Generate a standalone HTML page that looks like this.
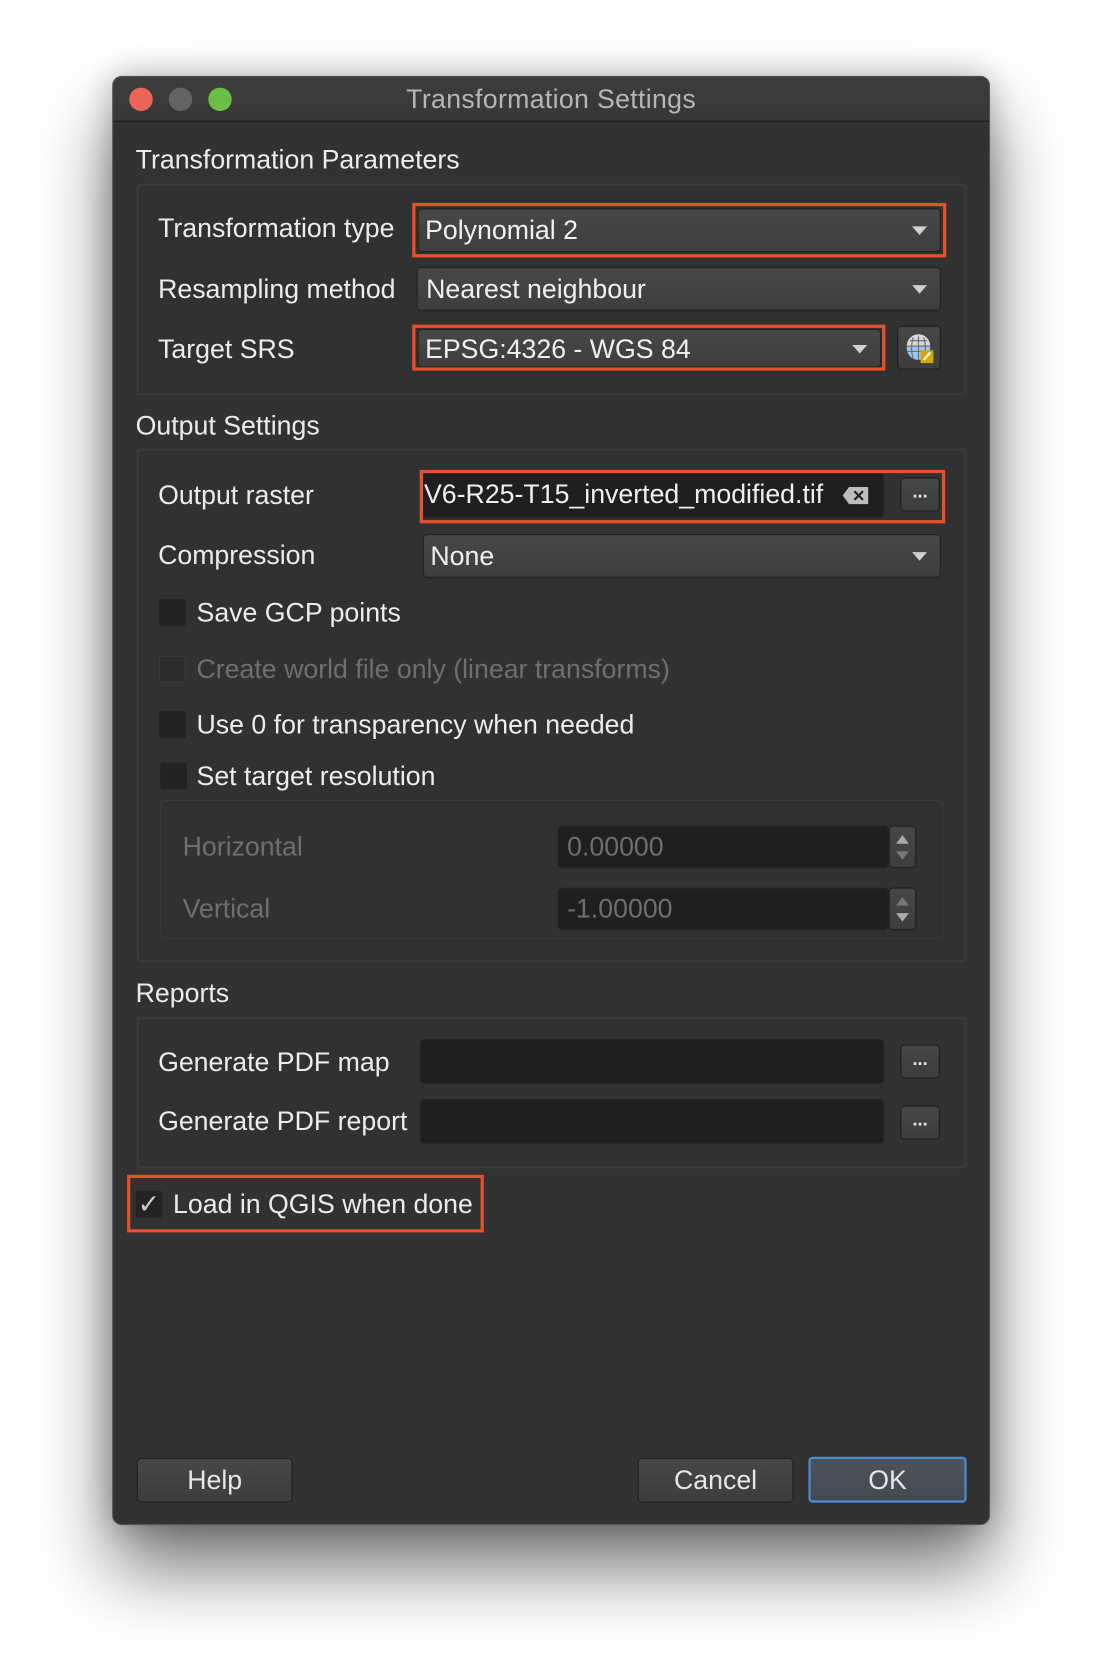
<!DOCTYPE html>
<html><head><meta charset="utf-8"><style>
html,body{margin:0;padding:0;background:#fff;}
body{width:1100px;height:1672px;overflow:hidden;position:relative;font-family:"Liberation Sans",sans-serif;}
#stage{position:absolute;left:0;top:0;width:1030px;height:1565px;transform:scale(1.068);transform-origin:0 0;}
.win{position:absolute;left:105px;top:71px;width:822px;height:1357px;background:#323232;border-radius:9px;border:1px solid #555;box-sizing:border-box;box-shadow:0 40px 70px rgba(0,0,0,0.55),0 0 30px rgba(0,0,0,0.25);overflow:hidden;}
.tb{position:absolute;left:0;top:0;right:0;height:41px;background:linear-gradient(#3d3d3d,#373737);border-bottom:1px solid #1a1a1a;}
.dot{position:absolute;top:10px;width:22px;height:22px;border-radius:50%;}
.title{position:absolute;left:0;right:0;top:7px;text-align:center;color:#b6b6b6;font-size:25px;letter-spacing:0.3px;}
.t{position:absolute;color:#ececec;font-size:25px;line-height:26px;white-space:nowrap;}
.dis{color:#6f6f6f;}
.grp{position:absolute;border:2px solid #3a3a3a;border-radius:4px;background:#313131;box-sizing:border-box;}
.combo{position:absolute;background:linear-gradient(#474747,#3e3e3e);border:1px solid #222;border-radius:4px;box-sizing:border-box;box-shadow:0 1px 0 #2a2a2a;}
.combo span{position:absolute;left:6px;top:7px;color:#f0f0f0;font-size:25px;line-height:26px;white-space:nowrap;}
.arr{position:absolute;right:12px;top:16px;width:0;height:0;border-left:7px solid transparent;border-right:7px solid transparent;border-top:8px solid #d0d0d0;}
.red{position:absolute;border:3px solid #e8502e;box-sizing:border-box;}
.field{position:absolute;background:#1f1f1f;border-radius:4px;box-sizing:border-box;border:1px solid #262626;}
.btn{position:absolute;background:linear-gradient(#474747,#3d3d3d);border:1px solid #1e1e1e;border-radius:4px;box-sizing:border-box;color:#e6e6e6;text-align:center;}
.cb{position:absolute;width:25px;height:25px;background:#232323;border-radius:2px;}
.dots{font-size:17px;font-weight:bold;line-height:26px;}
</style></head><body><div id="stage">
<div class="win">
 <div class="tb">
  <div class="dot" style="left:15px;background:#ec6559"></div>
  <div class="dot" style="left:52px;background:#636363"></div>
  <div class="dot" style="left:89px;background:#6cbf46"></div>
  <div class="title">Transformation Settings</div>
 </div>
</div>
<div class="t" style="left:127px;top:137px;">Transformation Parameters</div>
<div class="grp" style="left:128px;top:172px;width:777px;height:198px;"></div>
<div class="t" style="left:148px;top:201px;">Transformation type</div>
<div class="combo" style="left:391px;top:195px;width:490px;height:41px;"><span>Polynomial 2</span><div class="arr"></div></div>
<div class="red" style="left:386px;top:190px;width:500px;height:51px;"></div>
<div class="t" style="left:148px;top:258px;">Resampling method</div>
<div class="combo" style="left:390px;top:250px;width:491px;height:41px;"><span style="left:8px">Nearest neighbour</span><div class="arr"></div></div>
<div class="t" style="left:148px;top:314px;">Target SRS</div>
<div class="combo" style="left:391px;top:308px;width:434px;height:36px;"><span style="top:5px">EPSG:4326 - WGS 84</span><div class="arr" style="top:14px"></div></div>
<div class="red" style="left:386px;top:304px;width:443px;height:43px;"></div>
<div class="btn" style="left:840px;top:305px;width:41px;height:41px;">
 <svg width="39" height="39" viewBox="0 0 39 39"><circle cx="19" cy="20" r="11" fill="#9cc4ea"/><path d="M8 18 A11 11 0 0 1 30 18 Z" fill="#d8d8d8"/><path d="M8 18h22M11 13h16M19 9v22M14 10q-3 10 0 20M24 10q3 10 0 20M8 23h22" stroke="#666" stroke-width="1" fill="none"/><rect x="21" y="22" width="12" height="12" fill="#d4a800"/><path d="M24 31l6-7" stroke="#fff" stroke-width="2"/></svg>
</div>

<div class="t" style="left:127px;top:386px;">Output Settings</div>
<div class="grp" style="left:128px;top:420px;width:777px;height:481px;"></div>
<div class="t" style="left:148px;top:451px;">Output raster</div>
<div class="field" style="left:396px;top:443px;width:432px;height:42px;overflow:hidden;"><span style="position:absolute;left:0px;top:6px;color:#f0f0f0;font-size:25px;line-height:26px;white-space:nowrap;">V6-R25-T15_inverted_modified.tif</span>
 <svg style="position:absolute;left:392px;top:11px" width="24" height="18" viewBox="0 0 24 18"><path d="M0 9L6 1H24V17H6Z" fill="#bdbdbd"/><path d="M11 5l8 8M19 5l-8 8" stroke="#1f1f1f" stroke-width="2"/></svg></div>
<div class="btn dots" style="left:843px;top:447px;width:37px;height:32px;">...</div>
<div class="red" style="left:393px;top:440px;width:492px;height:50px;"></div>
<div class="t" style="left:148px;top:507px;">Compression</div>
<div class="combo" style="left:396px;top:500px;width:485px;height:41px;"><span>None</span><div class="arr"></div></div>
<div class="cb" style="left:149px;top:561px;"></div><div class="t" style="left:184px;top:561px;">Save GCP points</div>
<div class="cb" style="left:149px;top:614px;background:#2c2c2c;border:1px solid #3a3a3a;box-sizing:border-box;"></div><div class="t dis" style="left:184px;top:614px;">Create world file only (linear transforms)</div>
<div class="cb" style="left:149px;top:666px;"></div><div class="t" style="left:184px;top:666px;">Use 0 for transparency when needed</div>
<div class="cb" style="left:150px;top:714px;"></div><div class="t" style="left:184px;top:714px;">Set target resolution</div>
<div class="grp" style="left:150px;top:749px;width:733px;height:130px;border-width:1px;"></div>
<div class="t dis" style="left:171px;top:780px;">Horizontal</div>
<div class="field" style="left:522px;top:773px;width:310px;height:40px;"><span style="position:absolute;left:8px;top:6px;color:#6f6f6f;font-size:25px;line-height:26px">0.00000</span></div>
<div class="btn" style="left:832px;top:773px;width:26px;height:40px;"><svg width="24" height="38"><path d="M6 16l6-8 6 8Z" fill="#aaa"/><path d="M6 23l6 8 6-8Z" fill="#777"/></svg></div>
<div class="t dis" style="left:171px;top:838px;">Vertical</div>
<div class="field" style="left:522px;top:831px;width:310px;height:40px;"><span style="position:absolute;left:8px;top:6px;color:#6f6f6f;font-size:25px;line-height:26px">-1.00000</span></div>
<div class="btn" style="left:832px;top:831px;width:26px;height:40px;"><svg width="24" height="38"><path d="M6 16l6-8 6 8Z" fill="#777"/><path d="M6 23l6 8 6-8Z" fill="#aaa"/></svg></div>

<div class="t" style="left:127px;top:917px;">Reports</div>
<div class="grp" style="left:128px;top:952px;width:777px;height:142px;"></div>
<div class="t" style="left:148px;top:982px;">Generate PDF map</div>
<div class="field" style="left:393px;top:973px;width:435px;height:42px;"></div>
<div class="btn dots" style="left:843px;top:978px;width:37px;height:32px;">...</div>
<div class="t" style="left:148px;top:1037px;">Generate PDF report</div>
<div class="field" style="left:393px;top:1029px;width:435px;height:42px;"></div>
<div class="btn dots" style="left:843px;top:1035px;width:37px;height:32px;">...</div>

<div class="cb" style="left:127px;top:1115px;"></div>
<div class="t" style="left:129px;top:1115px;color:#ccc;">✓</div>
<div class="t" style="left:162px;top:1115px;">Load in QGIS when done</div>
<div class="red" style="left:119px;top:1100px;width:334px;height:54px;"></div>

<div class="btn" style="left:128px;top:1365px;width:146px;height:42px;font-size:25px;line-height:40px;">Help</div>
<div class="btn" style="left:597px;top:1365px;width:146px;height:42px;font-size:25px;line-height:40px;">Cancel</div>
<div class="btn" style="left:757px;top:1364px;width:148px;height:43px;font-size:25px;line-height:40px;background:linear-gradient(#4d525b,#454a52);border:2px solid #4a90dc;">OK</div>
</div></body></html>
